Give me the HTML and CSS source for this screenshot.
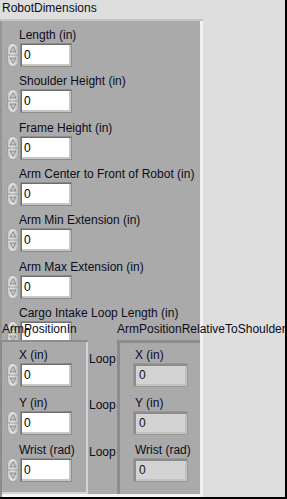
FILE: index.html
```html
<!DOCTYPE html>
<html lang="en">
<head>
    <meta charset="UTF-8">
    <title>RobotDimensions</title>
    <link rel="stylesheet" href="styles.css">
</head>
<body>
    <svg class="defs" width="0" height="0">
        <symbol id="spin" viewBox="0 0 12 24">
            <defs>
                <linearGradient id="spinFill" x1="0" y1="0" x2="1" y2="0">
                    <stop offset="0" stop-color="#c8c8c8"/>
                    <stop offset="0.45" stop-color="#e6e6e6"/>
                    <stop offset="1" stop-color="#b8b8b8"/>
                </linearGradient>
            </defs>
            <rect x="0.5" y="0.5" width="11" height="23" rx="5.5" fill="url(#spinFill)" stroke="#a0a0a0"/>
            <line x1="1" y1="12" x2="11" y2="12" stroke="#9c9c9c"/>
            <polygon points="6,3.5 9,9 3,9" fill="#c4c4c4" stroke="#7c7c7c" stroke-width="0.8"/>
            <polygon points="3,15 9,15 6,20.5" fill="#c4c4c4" stroke="#7c7c7c" stroke-width="0.8"/>
        </symbol>
    </svg>

    <div class="front-panel">
        <div class="cluster-title">RobotDimensions</div>
        <div class="main-cluster">
            <div class="field-list">
                <div class="field">
                    <div class="field-label">Length (in)</div>
                    <div class="numeric"><svg class="spinner"><use href="#spin"/></svg><div class="num-box">0</div></div>
                </div>
                <div class="field">
                    <div class="field-label">Shoulder Height (in)</div>
                    <div class="numeric"><svg class="spinner"><use href="#spin"/></svg><div class="num-box">0</div></div>
                </div>
                <div class="field">
                    <div class="field-label">Frame Height (in)</div>
                    <div class="numeric"><svg class="spinner"><use href="#spin"/></svg><div class="num-box">0</div></div>
                </div>
                <div class="field">
                    <div class="field-label">Arm Center to Front of Robot (in)</div>
                    <div class="numeric"><svg class="spinner"><use href="#spin"/></svg><div class="num-box">0</div></div>
                </div>
                <div class="field">
                    <div class="field-label">Arm Min Extension (in)</div>
                    <div class="numeric"><svg class="spinner"><use href="#spin"/></svg><div class="num-box">0</div></div>
                </div>
                <div class="field">
                    <div class="field-label">Arm Max Extension (in)</div>
                    <div class="numeric"><svg class="spinner"><use href="#spin"/></svg><div class="num-box">0</div></div>
                </div>
                <div class="field">
                    <div class="field-label">Cargo Intake Loop Length (in)</div>
                    <div class="numeric"><svg class="spinner"><use href="#spin"/></svg><div class="num-box">0</div></div>
                </div>
            </div>

            <!-- nested clusters sit on top of the last rows -->
            <div class="sub-clusters">
                <div class="sub sub-left">
                    <div class="cluster-title">ArmPositionIn</div>
                    <div class="sub-cluster">
                        <div class="field-list sub-list">
                            <div class="field">
                                <div class="field-label">X (in)</div>
                                <div class="numeric"><svg class="spinner"><use href="#spin"/></svg><div class="num-box">0</div></div>
                            </div>
                            <div class="field">
                                <div class="field-label">Y (in)</div>
                                <div class="numeric"><svg class="spinner"><use href="#spin"/></svg><div class="num-box">0</div></div>
                            </div>
                            <div class="field">
                                <div class="field-label">Wrist (rad)</div>
                                <div class="numeric"><svg class="spinner"><use href="#spin"/></svg><div class="num-box">0</div></div>
                            </div>
                        </div>
                    </div>
                </div>

                <!-- what shows of the hidden rows between the two clusters -->
                <div class="sub-gap">
                    <div class="gap-text">Loop</div>
                    <div class="gap-text">Loop</div>
                    <div class="gap-text">Loop</div>
                </div>

                <div class="sub sub-right">
                    <div class="cluster-title">ArmPositionRelativeToShoulder</div>
                    <div class="sub-cluster">
                        <div class="field-list sub-list">
                            <div class="field">
                                <div class="field-label">X (in)</div>
                                <div class="numeric"><div class="num-box indicator">0</div></div>
                            </div>
                            <div class="field">
                                <div class="field-label">Y (in)</div>
                                <div class="numeric"><div class="num-box indicator">0</div></div>
                            </div>
                            <div class="field">
                                <div class="field-label">Wrist (rad)</div>
                                <div class="numeric"><div class="num-box indicator">0</div></div>
                            </div>
                        </div>
                    </div>
                </div>
            </div>
        </div>
    </div>
</body>
</html>
```

FILE: styles.css
```css
html, body {
    margin: 0;
    padding: 0;
}

body {
    width: 287px;
    height: 499px;
    box-sizing: border-box;
    background: #dedede;
    border-right: 2px solid #000;
    border-bottom: 2px solid #000;
    font-family: 'Liberation Sans', Arial, sans-serif;
    font-size: 12px;
    color: #0c0c1c;
    overflow: hidden;
}

.defs {
    position: absolute;
}

.front-panel {
    padding-top: 1px;
}

.cluster-title {
    line-height: 15px;
    padding-left: 2px;
    white-space: nowrap;
}

/* Main cluster */
.main-cluster {
    position: relative;
    margin-top: 3px;
    width: 203px;
    height: 478px;
    box-sizing: border-box;
    padding: 9px 0 0 7px;
    background: #aaaaaa;
    box-shadow: inset 0 2px 0 #c4c4c4, inset 2px 0 0 #969696, inset -3px 0 0 #f2f2f2, inset 0 -3px 0 #f4f4f4;
}

.field-list {
    display: grid;
    grid-auto-rows: 39px;
    row-gap: 7.33px;
}

.field-label {
    line-height: 15px;
    padding-left: 12px;
    white-space: nowrap;
}

.numeric {
    display: flex;
    height: 24px;
}

.spinner {
    width: 12px;
    height: 24px;
    margin-right: 1px;
}

.num-box {
    width: 52px;
    height: 24px;
    box-sizing: border-box;
    padding-left: 3px;
    line-height: 22px;
    background: #fff;
    border: 1px solid #8c8c8c;
    box-shadow: inset 1px 1px 0 #6e6e6e, inset -2px -2px 0 #c6c6c6;
    color: #000;
}

/* Nested clusters */
.sub-clusters {
    position: absolute;
    top: 303px;
    left: 0;
    width: 200px;
    bottom: 3px;
    display: flex;
}

.sub {
    display: flex;
    flex-direction: column;
}

.sub-left {
    width: 88px;
}

.sub-right {
    width: 83px;
}

.sub-right .cluster-title {
    padding-left: 0;
}

.sub-gap {
    width: 29px;
    padding: 30px 0 0 1px;
    box-sizing: border-box;
    display: flex;
    flex-direction: column;
    gap: 31.33px;
}

.gap-text {
    line-height: 15px;
    white-space: nowrap;
}

.sub-cluster {
    flex: 1;
    margin-top: 3px;
    padding: 8px 0 0 7px;
    background: #aaaaaa;
    box-shadow: inset 2px 2px 0 #8c8c8c, inset -2px -2px 0 #d4d4d4;
}

.sub-right .sub-cluster {
    padding-left: 16px;
    box-shadow: inset 3px 3px 0 #8c8c8c;
}

.sub-list {
    row-gap: 8.5px;
}

.sub-right .field-label {
    padding-left: 2px;
}

.num-box.indicator {
    width: 55px;
    padding-left: 5px;
    background: #d3d3d3;
    border-color: #9a9a9a;
    box-shadow: inset 2px 2px 0 #8c8c8c, inset -2px -2px 0 #c2c2c2;
    color: #111;
}
```
